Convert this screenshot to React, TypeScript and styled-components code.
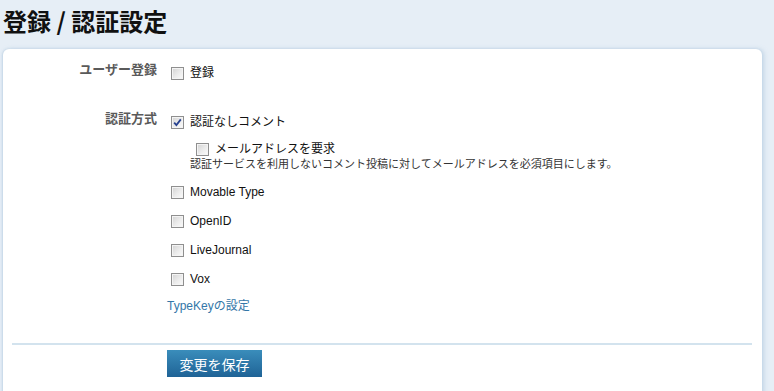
import React from "react";
import styled, { createGlobalStyle } from "styled-components";

const GlobalStyle = createGlobalStyle`
  html, body {
    margin: 0;
    padding: 0;
    background: #e6eef6;
  }
  body {
    font-family: "Liberation Sans", "Noto Sans CJK JP", sans-serif;
    color: #222;
  }
`;

type CheckItemProps = {
  label: string;
  checked?: boolean;
  sub?: boolean;
};

const CheckItem = ({ label, checked, sub }: CheckItemProps) => (
  <CheckRow $sub={sub}>
    <Box>
      {checked && (
        <svg width="9" height="9" viewBox="0 0 9 9">
          <path
            d="M1.2 4.6 L3.4 7 L7.8 1.4"
            fill="none"
            stroke="#27418f"
            strokeWidth="1.8"
          />
        </svg>
      )}
    </Box>
    <CheckText>{label}</CheckText>
  </CheckRow>
);

const App = () => {
  return (
    <Page>
      <GlobalStyle />
      <Title>登録 / 認証設定</Title>
      <Panel>
        <Field>
          <FieldLabel>ユーザー登録</FieldLabel>
          <FieldBody>
            <CheckItem label="登録" />
          </FieldBody>
        </Field>

        <Field $spaced>
          <FieldLabel>認証方式</FieldLabel>
          <FieldBody>
            <CheckItem label="認証なしコメント" checked />
            <SubOption>
              <CheckItem label="メールアドレスを要求" sub />
              <Hint>
                認証サービスを利用しないコメント投稿に対してメールアドレスを必須項目にします。
              </Hint>
            </SubOption>
            <Providers>
              <CheckItem label="Movable Type" />
              <CheckItem label="OpenID" />
              <CheckItem label="LiveJournal" />
              <CheckItem label="Vox" />
            </Providers>
            <SettingLink href="#">TypeKeyの設定</SettingLink>
          </FieldBody>
        </Field>

        <Divider />
        <Actions>
          <SaveButton type="button">変更を保存</SaveButton>
        </Actions>
      </Panel>
    </Page>
  );
};

export default App;

const Page = styled.div`
  width: 774px;
  height: 391px;
  overflow: hidden;
  padding: 0 12px 0 3px;
  box-sizing: border-box;
`;

const Title = styled.h1`
  margin: 0 0 13px;
  padding-top: 6px;
  font-family: "Noto Sans CJK JP", sans-serif;
  font-size: 24px;
  font-weight: bold;
  line-height: 30px;
  color: #111;
`;

const Panel = styled.div`
  background: #ffffff;
  border-radius: 6px 6px 0 0;
  box-shadow: 2px 0 4px rgba(170, 196, 220, 0.6), -1px 0 2px rgba(170, 196, 220, 0.5);
  padding-top: 12px;
  min-height: 360px;
`;

const Field = styled.div<{ $spaced?: boolean }>`
  display: grid;
  grid-template-columns: 154px 1fr;
  column-gap: 10px;
  align-items: start;
  margin-top: ${(p) => (p.$spaced ? "28px" : "0")};
`;

const FieldLabel = styled.div`
  text-align: right;
  font-family: "Noto Sans CJK JP", sans-serif;
  font-size: 13px;
  font-weight: bold;
  line-height: 16px;
  color: #5a5a5a;
`;

const FieldBody = styled.div`
  display: flex;
  flex-direction: column;
  padding-top: 3px;
`;

const CheckRow = styled.label<{ $sub?: boolean }>`
  display: flex;
  align-items: center;
  gap: 6px;
  height: ${(p) => (p.$sub ? "16px" : "18px")};
  padding-left: ${(p) => (p.$sub ? "29px" : "4px")};
  cursor: pointer;
`;

const Box = styled.span`
  width: 13px;
  height: 13px;
  box-sizing: border-box;
  border: 1px solid #8f8f8f;
  background: linear-gradient(135deg, #d2d2d2 0%, #ececec 55%, #fbfbfb 100%);
  box-shadow: inset 0 0 0 1px #f4f4f4;
  display: flex;
  align-items: center;
  justify-content: center;
  flex: none;
`;

const CheckText = styled.span`
  font-size: 12px;
  line-height: 16px;
  color: #111;
`;

const SubOption = styled.div`
  margin-top: 10px;
`;

const Hint = styled.div`
  font-size: 11px;
  line-height: 14px;
  color: #333;
  padding-left: 23px;
`;

const Providers = styled.div`
  display: flex;
  flex-direction: column;
  gap: 11px;
  margin-top: 12px;
`;

const SettingLink = styled.a`
  margin-top: 10px;
  font-size: 12px;
  line-height: 16px;
  color: #3477a8;
  text-decoration: none;
  align-self: flex-start;
`;

const Divider = styled.hr`
  margin: 29px 10px 0 9px;
  border: none;
  border-top: 2px solid #d3e3ee;
  height: 0;
`;

const Actions = styled.div`
  padding: 5px 0 0 164px;
`;

const SaveButton = styled.button`
  width: 95px;
  height: 27px;
  border: none;
  border-radius: 0;
  background: linear-gradient(#3a8dbb, #1f6396);
  color: #ffffff;
  font-family: "Noto Sans CJK JP", sans-serif;
  font-size: 14px;
  padding: 0;
  cursor: pointer;
`;
